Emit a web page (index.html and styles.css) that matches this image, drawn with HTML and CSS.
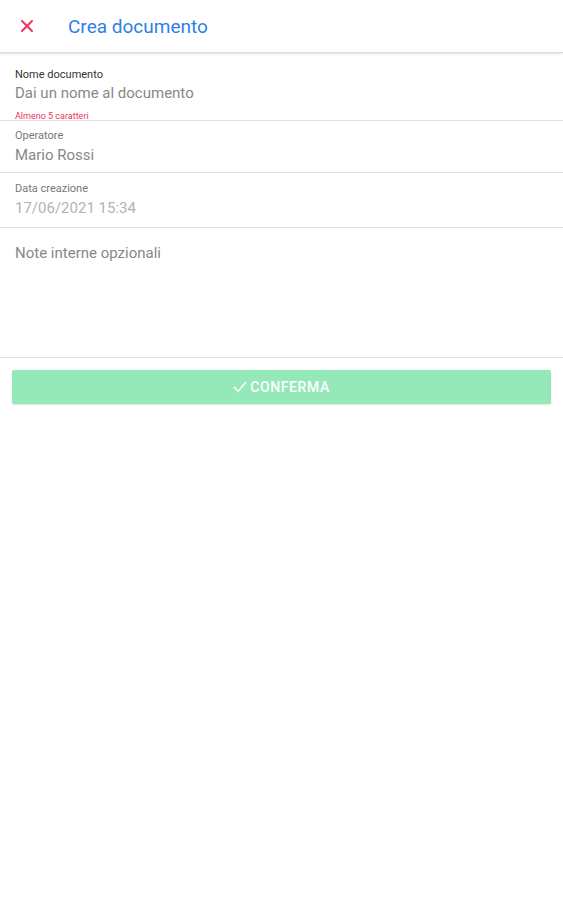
FILE: index.html
```html
<!DOCTYPE html>
<html lang="it">
<head>
<meta charset="utf-8">
<title>Crea documento</title>
<link rel="stylesheet" href="styles.css">
</head>
<body>
<header class="topbar">
  <button class="close" aria-label="Chiudi">
    <svg width="14" height="14" viewBox="0 0 14 14"><path d="M2 2 L12 12 M12 2 L2 12" stroke="#e8365d" stroke-width="2" stroke-linecap="round"/></svg>
  </button>
  <h1 class="title">Crea documento</h1>
</header>
<main class="form">
  <div class="field field-name">
    <div class="label label-dark">Nome documento</div>
    <div class="value placeholder">Dai un nome al documento</div>
    <div class="error">Almeno 5 caratteri</div>
  </div>
  <div class="field field-operator">
    <div class="label">Operatore</div>
    <div class="value">Mario Rossi</div>
  </div>
  <div class="field field-date">
    <div class="label">Data creazione</div>
    <div class="value disabled">17/06/2021 15:34</div>
  </div>
  <div class="notes">Note interne opzionali</div>
  <div class="actions">
    <button class="confirm">
      <svg width="14" height="12" viewBox="0 0 14 12"><path d="M1 6 L5 10.5 L13 1" fill="none" stroke="#fff" stroke-width="1.4"/></svg>
      <span>CONFERMA</span>
    </button>
  </div>
</main>
</body>
</html>
```
FILE: styles.css
```css
* { box-sizing: border-box; }
body {
  margin: 0;
  background: #fff;
  font-family: Roboto, "Liberation Sans", Arial, sans-serif;
  color: #333;
}
.topbar {
  height: 53px;
  display: flex;
  align-items: center;
  border-bottom: 1px solid #dcdcdc;
  box-shadow: 0 1px 2px rgba(0,0,0,0.12);
}
.close {
  width: 54px;
  height: 52px;
  padding: 0 0 0 20px;
  border: 0;
  background: none;
  display: flex;
  align-items: center;
}
.title {
  margin: 0 0 0 14px;
  font-size: 19px;
  font-weight: 400;
  color: #2f7fe6;
}
.field {
  padding: 8px 15px 0;
  border-bottom: 1px solid #e2e2e2;
}
.field-name { height: 68px; padding-top: 15px; }
.field-operator { height: 52px; }
.field-date { height: 55px; padding-top: 9px; }
.label {
  font-size: 11px;
  line-height: 13px;
  color: #777;
}
.label-dark { color: #333; }
.value {
  margin-top: 4px;
  font-size: 15px;
  line-height: 18px;
  color: #888;
}
.field-name .value { margin-top: 3px; }
.value.disabled { color: #b3b3b3; }
.error {
  margin-top: 9px;
  font-size: 9px;
  line-height: 11px;
  color: #e8365d;
}
.notes {
  height: 130px;
  padding: 16px 15px 0;
  font-size: 15px;
  line-height: 18px;
  color: #888;
  border-bottom: 1px solid #e2e2e2;
}
.actions { padding: 12px 12px; }
.confirm {
  width: 100%;
  height: 34px;
  border: 0;
  border-radius: 2px;
  background: #95e9b8;
  box-shadow: 0 1px 2px rgba(0,0,0,0.12);
  color: #fff;
  font-family: Roboto, "Liberation Sans", Arial, sans-serif;
  font-size: 14px;
  font-weight: 500;
  letter-spacing: 0.6px;
  display: flex;
  align-items: center;
  justify-content: center;
  gap: 3px;
}
```
